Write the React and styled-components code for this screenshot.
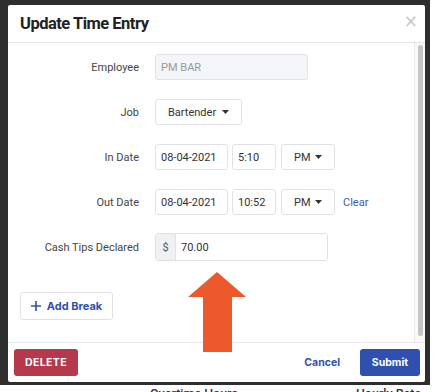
import styled, { createGlobalStyle } from 'styled-components';

const GlobalStyle = createGlobalStyle`
  * { box-sizing: border-box; }
  body {
    margin: 0;
    background: #fff;
    font-family: Roboto, "Liberation Sans", sans-serif;
  }
`;

function Caret() {
  return (
    <svg width="7" height="4" viewBox="0 0 7 4">
      <path d="M0 0h7L3.5 4z" fill="#333" />
    </svg>
  );
}

function Select({ value, width, offset = 0 }) {
  return (
    <SelectBox width={width} offset={offset}>
      <span>{value}</span>
      <Caret />
    </SelectBox>
  );
}

export default function App() {
  return (
    <Screen>
      <GlobalStyle />
      <Overlay>
        <Modal>
          <Header>
            <h1>Update Time Entry</h1>
            <Close>×</Close>
          </Header>
          <Body>
            <Content>
              <Form>
                <Label>Employee</Label>
                <Field>
                  <Input width={153} disabled value="PM BAR" readOnly />
                </Field>

                <Label>Job</Label>
                <Field>
                  <Select value="Bartender" width={87} />
                </Field>

                <Label>In Date</Label>
                <Field>
                  <Input width={73} value="08-04-2021" readOnly />
                  <Input width={44} value="5:10" readOnly />
                  <Select value="PM" width={54} offset={1} />
                </Field>

                <Label>Out Date</Label>
                <Field>
                  <Input width={73} value="08-04-2021" readOnly />
                  <Input width={44} value="10:52" readOnly />
                  <Select value="PM" width={54} offset={1} />
                  <LinkText>Clear</LinkText>
                </Field>

                <Label>Cash Tips Declared</Label>
                <Field>
                  <MoneyGroup>
                    <Prefix>$</Prefix>
                    <MoneyInput value="70.00" readOnly />
                  </MoneyGroup>
                </Field>
              </Form>
              <AddBreak>
                <svg width="10" height="10" viewBox="0 0 10 10">
                  <path d="M5 0v10M0 5h10" stroke="#3050b0" strokeWidth="1.6" />
                </svg>
                Add Break
              </AddBreak>
            </Content>
            <ScrollTrack>
              <ScrollThumb />
            </ScrollTrack>
          </Body>
          <Footer>
            <Button kind="danger">DELETE</Button>
            <FooterRight>
              <TextButton>Cancel</TextButton>
              <Button kind="primary">Submit</Button>
            </FooterRight>
          </Footer>
          <Arrow width="58" height="80" viewBox="0 0 58 80">
            <path d="M29 0L58 25H44V80H15V25H0z" fill="#ec5a2b" />
          </Arrow>
        </Modal>
      </Overlay>
      <PageBelow>
        <span>Overtime Hours</span>
        <span>Hourly Rate</span>
      </PageBelow>
    </Screen>
  );
}

const Screen = styled.div`
  width: 436px;
  height: 392px;
  overflow: hidden;
  background: #fff;
`;

const Overlay = styled.div`
  width: 430px;
  height: 385px;
  padding: 5px 5px 3px 8px;
  background: #2e2e2e;
`;

const Modal = styled.div`
  position: relative;
  height: 100%;
  background: #fff;
  border-radius: 2px;
  display: flex;
  flex-direction: column;
`;

const Header = styled.div`
  height: 38px;
  flex-shrink: 0;
  padding: 0 12px;
  display: flex;
  align-items: center;
  justify-content: space-between;
  border-bottom: 1px solid #e6e6ea;

  h1 {
    margin: 0;
    font-family: Roboto, "Liberation Sans", sans-serif;
    font-size: 16.5px;
    font-weight: 700;
    color: #222;
    letter-spacing: -0.5px;
  }
`;

const Close = styled.span`
  font-family: "DejaVu Sans", sans-serif;
  font-size: 17px;
  color: #c8c8c8;
  margin-right: -5px;
  margin-top: -6px;
`;

const Body = styled.div`
  flex: 1;
  min-height: 0;
  display: flex;
`;

const Content = styled.div`
  flex: 1;
  padding: 11px 12px;
`;

const ScrollTrack = styled.div`
  width: 11px;
  padding: 2px 2px 6px 3px;
  background: #fafafa;
  border-left: 1px solid #e8e8e8;
`;

const ScrollThumb = styled.div`
  height: 100%;
  border-radius: 3px;
  background: #c4c4c4;
`;

const Form = styled.div`
  display: grid;
  grid-template-columns: 119px auto;
  column-gap: 16px;
  row-gap: 19px;
  align-items: center;
`;

const Label = styled.div`
  text-align: right;
  font-size: 11px;
  color: #444;
`;

const Field = styled.div`
  display: flex;
  align-items: center;
  gap: 4px;
  height: 26px;
`;

const Input = styled.input`
  width: ${p => p.width}px;
  height: 26px;
  padding: 0 5px;
  border: 1px solid #e2e2e6;
  border-radius: 3px;
  font-family: Roboto, sans-serif;
  font-size: 11px;
  color: #333;
  background: #fff;
  outline: none;

  &:disabled {
    background: #f4f5f8;
    color: #9a9a9a;
  }
`;

const SelectBox = styled.div`
  width: ${p => p.width}px;
  height: 26px;
  padding: 0 12px;
  margin-left: ${p => p.offset}px;
  border: 1px solid #e2e2e6;
  border-radius: 3px;
  display: flex;
  align-items: center;
  justify-content: space-between;
  font-size: 11px;
  color: #333;
`;

const LinkText = styled.span`
  margin-left: 4px;
  font-size: 11px;
  color: #3b5bb5;
`;

const MoneyGroup = styled.div`
  width: 173px;
  height: 28px;
  display: flex;
  border: 1px solid #e2e2e6;
  border-radius: 3px;
  overflow: hidden;
`;

const Prefix = styled.div`
  width: 20px;
  background: #f1f1f3;
  border-right: 1px solid #e2e2e6;
  display: flex;
  align-items: center;
  justify-content: center;
  font-size: 11px;
  color: #555;
`;

const MoneyInput = styled.input`
  flex: 1;
  min-width: 0;
  border: none;
  padding: 0 5px;
  font-family: Roboto, sans-serif;
  font-size: 11px;
  color: #333;
  outline: none;
`;

const AddBreak = styled.button`
  margin-top: 32px;
  width: 93px;
  height: 28px;
  display: flex;
  align-items: center;
  justify-content: center;
  gap: 6px;
  background: #fff;
  border: 1px solid #e2e2e6;
  border-radius: 3px;
  font-family: Inter, sans-serif;
  font-size: 11px;
  font-weight: 700;
  color: #3050b0;
`;

const Footer = styled.div`
  height: 40px;
  flex-shrink: 0;
  padding: 0 5px 0 6px;
  display: flex;
  align-items: center;
  justify-content: space-between;
  border-top: 1px solid #e6e6ea;
`;

const FooterRight = styled.div`
  display: flex;
  align-items: center;
  gap: 20px;
`;

const Button = styled.button`
  height: 27px;
  padding: 0;
  border: none;
  border-radius: 3px;
  font-family: Inter, sans-serif;
  font-size: 10.5px;
  font-weight: 700;
  letter-spacing: ${p => (p.kind === 'danger' ? '0.4px' : '0')};
  color: #fff;
  background: ${p => (p.kind === 'danger' ? '#b3394b' : '#3050b0')};
  width: ${p => (p.kind === 'danger' ? '64px' : '60px')};
`;

const TextButton = styled.button`
  border: none;
  background: none;
  padding: 0;
  font-family: Inter, sans-serif;
  font-size: 10.5px;
  font-weight: 700;
  color: #3050b0;
`;

const Arrow = styled.svg`
  position: absolute;
  left: 180px;
  top: 267px;
`;

const PageBelow = styled.div`
  height: 7px;
  overflow: hidden;
  display: flex;
  padding-left: 150px;
  gap: 118px;
  font-family: Roboto, sans-serif;
  font-size: 12.5px;
  font-weight: 500;
  color: #333;

  span {
    display: block;
    line-height: 12px;
    margin-top: 3px;
  }
`;
